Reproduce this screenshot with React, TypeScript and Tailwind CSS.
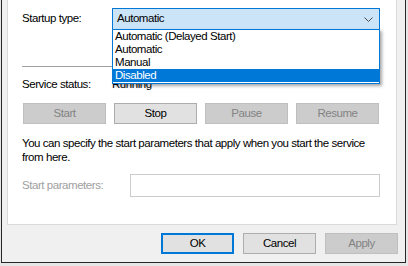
import React from "react";

const font = { fontFamily: '"Liberation Sans", Arial, sans-serif' };

function Btn({ label, disabled, def, w }: { label: string; disabled?: boolean; def?: boolean; w: string }) {
  const base = "flex items-center justify-center h-[21px] text-[11.5px] tracking-[-0.45px] leading-none";
  if (def)
    return <div className={`${base} ${w} border-2 border-[#0078d7] bg-[#e1e1e1] text-black`}>{label}</div>;
  if (disabled)
    return <div className={`${base} ${w} border border-[#bfbfbf] bg-[#cccccc] text-[#838383]`}>{label}</div>;
  return <div className={`${base} ${w} border border-[#adadad] bg-[#e1e1e1] text-black`}>{label}</div>;
}

export default function App() {
  return (
    <div className="w-[408px] h-[266px] bg-[#e6e6e6] overflow-hidden" style={font}>
      <div className="ml-[1px] w-[405px] h-[263px] border-l border-r border-b border-[#262626] bg-[#f0f0f0] flex flex-col">
        <div className="ml-[5px] w-[390px] h-[225px] bg-white border-l border-r border-b border-[#dadada] pl-[14px] relative text-[11.5px] tracking-[-0.45px] text-black whitespace-nowrap">
          <div className="mt-[8px] h-[22px] flex items-center">
            <div className="w-[90px]">Startup type:</div>
            <div className="w-[268px] h-[22px] border border-[#0078d7] bg-[#cce4f7] flex items-center pl-[4px] pr-[6px]">
              <span className="flex-1">Automatic</span>
              <svg width="9" height="5" viewBox="0 0 9 5">
                <path d="M0.5 0.5 L4.5 4.5 L8.5 0.5" fill="none" stroke="#4a4a4a" strokeWidth="1" />
              </svg>
            </div>
          </div>
          <div className="mt-[36px] h-px w-[357px] bg-[#a0a0a0]" />
          <div className="mt-[11px] h-[14px] flex items-center">
            <div className="w-[90px]">Service status:</div>
            <div>Running</div>
          </div>
          <div className="mt-[11px] ml-[1px] flex gap-[8px]">
            <Btn label="Start" disabled w="w-[83px]" />
            <Btn label="Stop" w="w-[83px]" />
            <Btn label="Pause" disabled w="w-[83px]" />
            <Btn label="Resume" disabled w="w-[83px]" />
          </div>
          <div className="mt-[12px] leading-[14px]">
            You can specify the start parameters that apply when you start the service
            <br />
            from here.
          </div>
          <div className="mt-[10px] h-[23px] flex items-center">
            <div className="w-[108px] text-[#a0a0a0]">Start parameters:</div>
            <div className="w-[250px] h-[23px] border border-[#cccccc] bg-white" />
          </div>
          <div className="absolute left-[104px] top-[29px] w-[268px] h-[55px] border border-[#0078d7] bg-white shadow-[2px_2px_3px_rgba(0,0,0,0.35)] flex flex-col">
            <div className="h-[13px] leading-[13px] pl-[2px]">Automatic (Delayed Start)</div>
            <div className="h-[13px] leading-[13px] pl-[2px]">Automatic</div>
            <div className="h-[13px] leading-[13px] pl-[2px]">Manual</div>
            <div className="h-[13px] leading-[13px] pl-[2px] bg-[#0078d7] text-white">Disabled</div>
          </div>
        </div>
        <div className="mt-[8px] pr-[7px] flex justify-end gap-[9px]">
          <Btn label="OK" def w="w-[73px]" />
          <Btn label="Cancel" w="w-[73px]" />
          <Btn label="Apply" disabled w="w-[73px]" />
        </div>
      </div>
    </div>
  );
}
